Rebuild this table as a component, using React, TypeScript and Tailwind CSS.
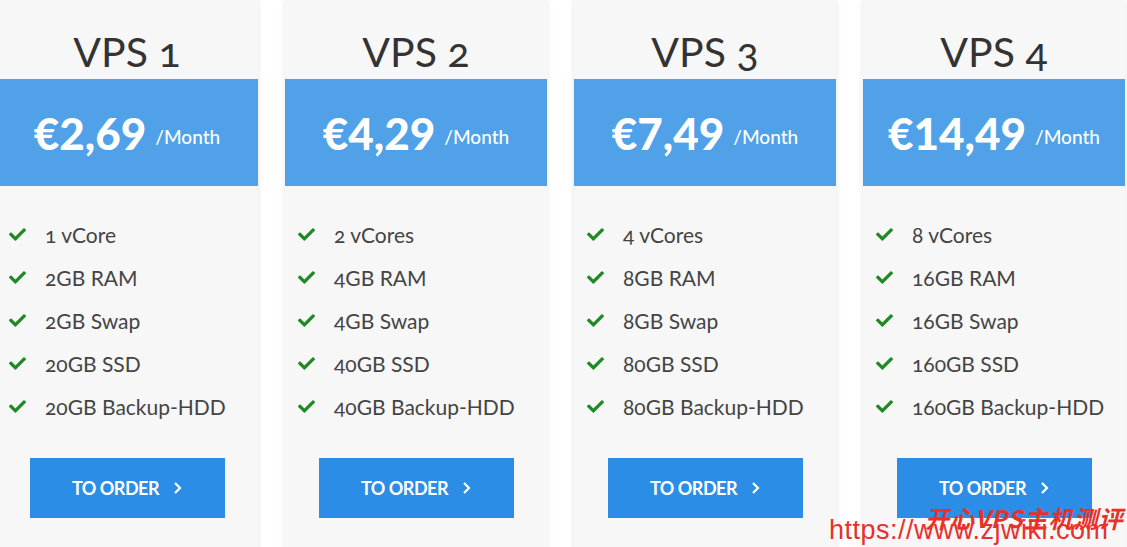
import { FaCheck } from "react-icons/fa";

const plans = [
  { name: "VPS 1", price: "€2,69", features: ["1 vCore", "2GB RAM", "2GB Swap", "20GB SSD", "20GB Backup-HDD"] },
  { name: "VPS 2", price: "€4,29", features: ["2 vCores", "4GB RAM", "4GB Swap", "40GB SSD", "40GB Backup-HDD"] },
  { name: "VPS 3", price: "€7,49", features: ["4 vCores", "8GB RAM", "8GB Swap", "80GB SSD", "80GB Backup-HDD"] },
  { name: "VPS 4", price: "€14,49", features: ["8 vCores", "16GB RAM", "16GB Swap", "160GB SSD", "160GB Backup-HDD"] },
];

function PlanCard({ plan }: { plan: (typeof plans)[number] }) {
  return (
    <div className="w-[262px] shrink-0 bg-[#f7f7f7] shadow-[0_0_6px_rgba(0,0,0,0.1)] h-[560px]">
      <div className="h-[80px] flex items-center justify-center pt-[24px]">
        <h2 className="text-[41px] leading-none font-normal text-[#333] oldstyle-nums">{plan.name}</h2>
      </div>
      <div className="h-[107px] bg-[#50a1e8] flex items-center justify-center gap-[9px] text-white">
        <span className="text-[44px] font-black leading-none">{plan.price}</span>
        <span className="text-[19px] font-medium mt-[10px]">/Month</span>
      </div>
      <ul className="pt-[27px] px-[13px]">
        {plan.features.map((f) => {
          return (
            <li key={f} className="h-[43px] flex items-center gap-[19px]">
              <FaCheck className="text-[#1f8a24] w-[17px] h-[17px]" />
              <span className="text-[21px] text-[#444] oldstyle-nums">{f}</span>
            </li>
          );
        })}
      </ul>
      <div className="flex justify-center mt-[30px]">
        <button className="w-[195px] h-[60px] bg-[#2b8de6] text-white font-bold text-[18px] flex items-center justify-center gap-[14px] tracking-[-0.5px]">
          TO ORDER
          <svg width="9" height="14" viewBox="0 0 9 14" fill="none">
            <path d="M2 2l5 5-5 5" stroke="white" strokeWidth="2.2" />
          </svg>
        </button>
      </div>
    </div>
  );
}

export default function App() {
  return (
    <div className="relative w-[1127px] h-[547px] overflow-hidden bg-white font-['Lato',sans-serif]">
      <div className="flex gap-[27px] ml-[-4px] mt-[-1px]">
        {plans.map((p) => (
          <PlanCard key={p.name} plan={p} />
        ))}
      </div>
      <div className="absolute left-[925px] top-[500px] text-[24px] italic font-bold text-[#e8312b] font-['Noto_Sans_CJK_SC',sans-serif] tracking-[1px]">
        开心VPS主机测评
      </div>
      <div className="absolute left-[829px] top-[514px] text-[27px] leading-[32px] text-[#e8312b] font-['Liberation_Sans',sans-serif] tracking-[0.5px]">
        https://www.zjwiki.com
      </div>
    </div>
  );
}
